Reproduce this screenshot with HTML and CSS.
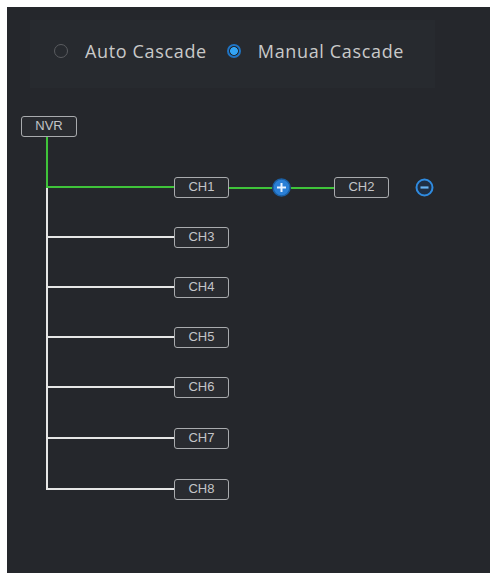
FILE: index.html
```html
<!DOCTYPE html>
<html>
<head>
<meta charset="utf-8">
<link rel="stylesheet" href="styles.css">
</head>
<body>
<div class="panel">
  <div class="modebar">
    <label class="radio"><span class="dot"></span><span class="label">Auto Cascade</span></label>
    <label class="radio on"><span class="dot"></span><span class="label">Manual Cascade</span></label>
  </div>
  <div class="tree">
    <div class="node nvr">NVR</div>
    <div class="rows">
      <div class="row green tall">
        <div class="elbow"></div>
        <div class="chain">
          <div class="node">CH1</div>
          <div class="link"></div>
          <svg class="icon" width="19" height="19" viewBox="0 0 19 19"><circle cx="9.5" cy="9.5" r="8.5" fill="#2a7fd6" stroke="#1b5fa3" stroke-width="1.5"/><path d="M9.5 5v9M5 9.5h9" stroke="#e8f2ff" stroke-width="2"/></svg>
          <div class="link"></div>
          <div class="node">CH2</div>
          <svg class="icon minus" width="19" height="19" viewBox="0 0 19 19"><circle cx="9.5" cy="9.5" r="8" fill="#1f2f44" stroke="#2f8be0" stroke-width="2"/><path d="M5.5 9.5h8" stroke="#6ab4f2" stroke-width="2.2"/></svg>
        </div>
      </div>
      <div class="row"><div class="elbow"></div><div class="chain"><div class="node">CH3</div></div></div>
      <div class="row"><div class="elbow"></div><div class="chain"><div class="node">CH4</div></div></div>
      <div class="row"><div class="elbow"></div><div class="chain"><div class="node">CH5</div></div></div>
      <div class="row"><div class="elbow"></div><div class="chain"><div class="node">CH6</div></div></div>
      <div class="row tall"><div class="elbow"></div><div class="chain"><div class="node">CH7</div></div></div>
      <div class="row tall"><div class="elbow"></div><div class="chain"><div class="node">CH8</div></div></div>
    </div>
  </div>
</div>
</body>
</html>
```

FILE: styles.css
```css
html, body {
  margin: 0;
  padding: 0;
  background: #ffffff;
}

.panel {
  margin: 7px 0 0 7px;
  width: 483px;
  height: 566px;
  background: #25272c;
  box-sizing: border-box;
  padding-top: 13px;
  overflow: hidden;
}

.modebar {
  margin-left: 23px;
  width: 405px;
  height: 68px;
  background: #272a2f;
  display: flex;
  align-items: center;
  padding-left: 24px;
  box-sizing: border-box;
  gap: 20px;
  padding-bottom: 6px;
}

.radio {
  display: flex;
  align-items: center;
  gap: 17px;
  font-family: "Open Sans", "Noto Sans", sans-serif;
  font-size: 18px;
  letter-spacing: 0.65px;
  color: #c9c9c9;
}

.dot {
  width: 14px;
  height: 14px;
  border-radius: 50%;
  box-sizing: border-box;
  border: 1.5px solid #5a5c60;
}

.radio.on .dot {
  border: 2px solid #1f74c4;
  background: radial-gradient(circle, #33a4f5 0 3.6px, #22252a 4.2px);
}

.tree {
  margin-left: 14px;
  margin-top: 28px;
}

.node {
  width: 55px;
  height: 21px;
  box-sizing: border-box;
  border: 1.5px solid #a9abae;
  border-radius: 3px;
  background: #292b30;
  color: #c4c5c8;
  font-family: "Liberation Sans", Arial, sans-serif;
  font-size: 13px;
  line-height: 18px;
  text-align: center;
  flex: none;
}

.nvr {
  width: 56px;
}

.rows {
  margin-left: 25px;
  display: flex;
  flex-direction: column;
}

.row {
  display: flex;
  align-items: flex-end;
  height: 50px;
}

.row.tall {
  height: 51px;
}

.elbow {
  width: 128px;
  height: 100%;
  box-sizing: border-box;
  border-left: 2px solid #e6e6e6;
  border-bottom: 2px solid #e6e6e6;
  flex: none;
}

.row.green .elbow {
  border-color: #3fc43a;
}

.chain {
  display: flex;
  align-items: center;
  height: 21px;
  margin-bottom: -10px;
}

.link {
  width: 43px;
  height: 2px;
  background: #3fc43a;
}

.icon {
  display: block;
  flex: none;
}

.minus {
  margin-left: 26px;
}
```
